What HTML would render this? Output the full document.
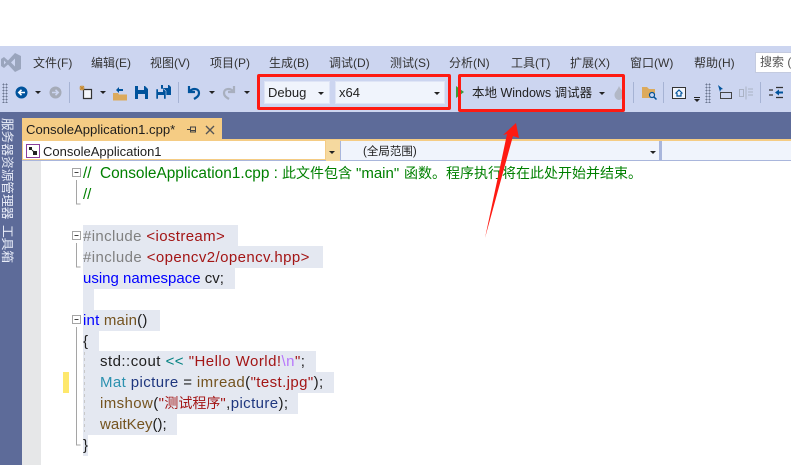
<!DOCTYPE html>
<html><head><meta charset="utf-8">
<style>
*{margin:0;padding:0;box-sizing:border-box}
html,body{width:791px;height:465px;overflow:hidden;background:#fff}
body{position:relative;font-family:"Liberation Sans","Noto Sans CJK SC",sans-serif;color:#222}
.a{position:absolute;white-space:nowrap}
.m{top:55px;font-size:12px;line-height:16px;color:#333}
.hl{position:absolute;background:#e4e8f1}
.c{position:absolute;left:0;white-space:pre;font-size:15px;line-height:21px;height:21px;color:#1e1e1e}
.g{color:#008000}.b{color:#0000ff}.r{color:#a31515}.p{color:#808080}.f{color:#74531f}.t{color:#2b91af}.n{color:#1f377f}.o{color:#008080}.e{color:#b776fb}
.cj{font-size:14px;letter-spacing:0}
.sep{position:absolute;top:82px;width:1px;height:21px;background:#a6b3d4}
.box{position:absolute;border:3px solid #fe1a12;border-radius:2px}
.dd{position:absolute;width:0;height:0;border-left:3.5px solid transparent;border-right:3.5px solid transparent;border-top:3.5px solid #222}
.grip{position:absolute;background-image:radial-gradient(circle,#6b7690 .8px,transparent .9px);background-size:3px 3px}
.side{position:absolute;left:0;width:14px;writing-mode:vertical-rl;text-orientation:sideways;font-size:12.700px;line-height:14px;color:#e8ecf8;white-space:nowrap}
svg{position:absolute;overflow:visible}
</style></head><body>
<div class="a" style="left:0;top:46px;width:791px;height:66px;background:#ccd5f0"></div>
<div class="a" style="left:0;top:112px;width:791px;height:27px;background:#5d6b99"></div>
<div class="a" style="left:0;top:139px;width:22px;height:326px;background:#5d6b99"></div>
<div class="a" style="left:22px;top:161px;width:19px;height:304px;background:#e6e7e8"></div>

<svg style="left:0;top:52px" width="22" height="21" viewBox="0 0 22 21"><path d="M1 7l3-2 4 3.500L15 1l6 3v13l-6 3-7-7.500L4 16l-3-2zM4 8.500v4l2-2zM15 6.500l-4 4 4 4z" fill="#9aa5bd" fill-rule="evenodd"/></svg>
<div class="a m" style="left:33px">文件(F)</div>
<div class="a m" style="left:91px">编辑(E)</div>
<div class="a m" style="left:150px">视图(V)</div>
<div class="a m" style="left:210px">项目(P)</div>
<div class="a m" style="left:269px">生成(B)</div>
<div class="a m" style="left:329px">调试(D)</div>
<div class="a m" style="left:390px">测试(S)</div>
<div class="a m" style="left:449px">分析(N)</div>
<div class="a m" style="left:511px">工具(T)</div>
<div class="a m" style="left:570px">扩展(X)</div>
<div class="a m" style="left:630px">窗口(W)</div>
<div class="a m" style="left:694px">帮助(H)</div>
<div class="a" style="left:755px;top:52px;width:40px;height:21px;background:#fff;border:1px solid #c4cbe0;font-size:12px;line-height:19px;padding-left:4px;color:#555">搜索 (</div>

<!-- toolbar -->
<div class="grip" style="left:2px;top:83px;width:6px;height:20px"></div>
<svg style="left:15px;top:86px" width="13" height="13" viewBox="0 0 13 13"><circle cx="6.500" cy="6.500" r="6" fill="#00539c"/><path d="M10 6.500H4M6.500 3.800L3.800 6.500l2.700 2.700" stroke="#fff" stroke-width="1.600" fill="none"/></svg>
<div class="dd" style="left:35px;top:91px"></div>
<svg style="left:49px;top:86px" width="13" height="13" viewBox="0 0 13 13"><circle cx="6.500" cy="6.500" r="6" fill="#a5abb8"/><path d="M3 6.500h6M6.500 3.800l2.700 2.700-2.700 2.700" stroke="#ccd5f0" stroke-width="1.600" fill="none"/></svg>
<div class="sep" style="left:69px"></div>
<svg style="left:79px;top:85px" width="14" height="15" viewBox="0 0 14 15"><path d="M4.500 4.500h8v9h-8z" fill="#f4f6fb" stroke="#333" stroke-width="1.200"/><path d="M3 .5v5M.5 3h5M1 1l4 4M5 1L1 5" stroke="#c98a2c" stroke-width="1"/></svg>
<div class="dd" style="left:100px;top:91px"></div>
<svg style="left:112px;top:85px" width="16" height="16" viewBox="0 0 16 16"><path d="M1 8h5l1 1.500h8v6H1z" fill="#dcaa5c"/><path d="M4 6l3-3v2h4v2H7v2z" fill="#00539c" transform="translate(0 -1)"/></svg>
<svg style="left:135px;top:86px" width="13" height="13" viewBox="0 0 13 13"><path d="M0 0h10l3 3v10H0z" fill="#00539c"/><path d="M3 0h6v4H3zM3 8h7v5H3z" fill="#ccd5f0"/></svg>
<svg style="left:156px;top:85px" width="15" height="14" viewBox="0 0 15 14"><path d="M5 0h8l2 2v8H5z" fill="#00539c"/><path d="M7 0h5v3H7z" fill="#ccd5f0"/><path d="M0 4h8l2 2v8H0z" fill="#00539c" stroke="#ccd5f0" stroke-width=".6"/><path d="M2 4h5v3H2zM2 10h6v4H2z" fill="#ccd5f0"/></svg>
<div class="sep" style="left:178px"></div>
<svg style="left:187px;top:85px" width="14" height="15" viewBox="0 0 14 15"><path d="M2 1v6h6M2.500 6.500C6 2.500 12 3.500 12 8c0 3-2.500 4.500-5 6" fill="none" stroke="#00539c" stroke-width="2.200"/></svg>
<div class="dd" style="left:209px;top:91px"></div>
<svg style="left:222px;top:85px" width="14" height="15" viewBox="0 0 14 15"><path d="M12 1v6H6M11.500 6.500C8 2.500 2 3.500 2 8c0 3 2.500 4.500 5 6" fill="none" stroke="#a8afbe" stroke-width="2.200"/></svg>
<div class="dd" style="left:244px;top:91px"></div>

<div class="a" style="left:264px;top:81px;width:66px;height:23px;background:#f0f4fc;border:1px solid #dfe5f6;font-size:13px;line-height:21px;padding-left:3px">Debug</div>
<div class="dd" style="left:318px;top:92px"></div>
<div class="a" style="left:335px;top:81px;width:110px;height:23px;background:#f0f4fc;border:1px solid #dfe5f6;font-size:13px;line-height:21px;padding-left:3px">x64</div>
<div class="dd" style="left:434px;top:92px"></div>
<svg style="left:456px;top:86px" width="9" height="12" viewBox="0 0 9 12"><path d="M0 0l8 6-8 6z" fill="#3c9a3c"/></svg>
<div class="a" style="left:472px;top:85px;font-size:12.500px;line-height:16px;color:#222">本地 Windows 调试器</div>
<div class="dd" style="left:599px;top:92px"></div>
<svg style="left:614px;top:86px" width="10" height="14" viewBox="0 0 10 14"><path d="M5 0c1 3 5 5 4.500 9C9 12 7 14 5 14S.5 12 .5 9C.5 6 3 5 5 0z" fill="#b2b8c6"/></svg>
<div class="sep" style="left:633px"></div>
<svg style="left:642px;top:86px" width="15" height="14" viewBox="0 0 15 14"><path d="M0 1h5l2 2h6v9H0z" fill="#dcaa5c"/><circle cx="10" cy="9" r="2.500" fill="#ccd5f0" stroke="#00539c" stroke-width="1.200"/><path d="M12 11l2.500 2.500" stroke="#00539c" stroke-width="1.500"/></svg>
<div class="sep" style="left:663px"></div>
<svg style="left:672px;top:87px" width="14" height="12" viewBox="0 0 14 12"><rect x=".5" y=".5" width="13" height="11" fill="#f0f4fc" stroke="#333"/><path d="M3.500 6.500L7 3l3.500 3.500M5 6v3h4V6" fill="none" stroke="#00539c" stroke-width="1.200"/></svg>
<div class="a" style="left:694px;top:97px;width:6px;height:1px;background:#222"></div>
<div class="dd" style="left:694px;top:99px;border-left-width:3px;border-right-width:3px;border-top-width:3px"></div>
<div class="grip" style="left:705px;top:83px;width:6px;height:20px"></div>
<svg style="left:717px;top:85px" width="15" height="15" viewBox="0 0 15 15"><rect x="3.500" y="7.500" width="11" height="6" fill="none" stroke="#444"/><path d="M1 0l5 4-2 .5L3 7z" fill="#00539c"/></svg>
<svg style="left:739px;top:86px" width="14" height="14" viewBox="0 0 14 14"><path d="M.5 3.500h4v7h-4zM7 .5v13M9 3h5M9 6h5M9 9h5" fill="none" stroke="#aab2c4"/></svg>
<div class="sep" style="left:760px"></div>
<svg style="left:769px;top:87px" width="15" height="11" viewBox="0 0 15 11"><path d="M0 3h4M0 8h4M14 .5H7M14 10.500H7" stroke="#333" stroke-width="1.300"/><path d="M6 5.500L10 2.500v2h4v2h-4v2z" fill="#00539c"/></svg>

<!-- red boxes -->
<div class="box" style="left:257px;top:74px;width:194px;height:36px"></div>
<div class="box" style="left:458px;top:74px;width:167px;height:38px"></div>

<!-- tab -->
<div class="a" style="left:22px;top:118px;width:200px;height:21px;background:#f5cc84;font-size:13.100px;line-height:23px;padding-left:4px;color:#1e1e1e">ConsoleApplication1.cpp*</div>
<svg style="left:187px;top:125px" width="10" height="9" viewBox="0 0 10 9"><path d="M0 4.500h3.500M3.500 1.500v6M3.500 2h5v5h-5M3.500 5.500h5" fill="none" stroke="#444"/></svg>
<svg style="left:205px;top:125px" width="10" height="10" viewBox="0 0 10 10"><path d="M1 1l8 8M9 1l-8 8" stroke="#555" stroke-width="1.400"/></svg>
<div class="a" style="left:22px;top:139px;width:769px;height:2px;background:#f5cc84"></div>

<!-- nav bar -->
<div class="a" style="left:22px;top:141px;width:769px;height:19px;background:#f0f4fc"></div>
<div class="a" style="left:22px;top:160px;width:769px;height:1px;background:#a9b6dc"></div>
<div class="a" style="left:22px;top:141px;width:304px;height:19px;background:#fff;border:1px solid #f5cc84;border-top:none"></div>
<div class="a" style="left:326px;top:140px;width:14px;height:21px;background:#f5d99f"></div>
<div class="dd" style="left:329px;top:151px"></div>
<svg style="left:26px;top:144px" width="14" height="14" viewBox="0 0 14 14"><rect x=".5" y=".5" width="13" height="13" fill="#fff" stroke="#8a3f9c"/><path d="M3 3h3v3H3zM7 7h4v4H7z" fill="#222"/><path d="M6 6l2 2" stroke="#222"/></svg>
<div class="a" style="left:43px;top:144px;font-size:13px;line-height:16px;color:#1e1e1e">ConsoleApplication1</div>
<div class="a" style="left:340px;top:141px;width:1px;height:19px;background:#a9b6dc"></div>
<div class="a" style="left:363px;top:144px;font-size:11.500px;line-height:16px;color:#1e1e1e">(全局范围)</div>
<div class="dd" style="left:650px;top:151px"></div>
<div class="a" style="left:659px;top:141px;width:3px;height:20px;background:#a9b6dc"></div>

<!-- highlights -->
<div class="hl" style="left:83px;top:225px;width:155px;height:21px"></div>
<div class="hl" style="left:83px;top:246px;width:240px;height:22px"></div>
<div class="hl" style="left:83px;top:268px;width:152px;height:21px"></div>
<div class="hl" style="left:83px;top:289px;width:11px;height:21px"></div>
<div class="hl" style="left:83px;top:310px;width:77px;height:21px"></div>
<div class="hl" style="left:83px;top:331px;width:16px;height:20px"></div>
<div class="hl" style="left:83px;top:351px;width:233px;height:21px"></div>
<div class="hl" style="left:83px;top:372px;width:251px;height:21px"></div>
<div class="hl" style="left:83px;top:393px;width:215px;height:21px"></div>
<div class="hl" style="left:83px;top:414px;width:94px;height:21px"></div>
<div class="hl" style="left:83px;top:435px;width:5px;height:21px"></div>

<!-- outline -->
<svg style="left:0;top:0" width="791" height="465">
<g fill="#fff" stroke="#a5a5a5"><rect x="72.500" y="168.500" width="8" height="8"/><rect x="72.500" y="231.500" width="8" height="8"/><rect x="72.500" y="315.500" width="8" height="8"/></g>
<path d="M74.500 172.500h4M74.500 235.500h4M74.500 319.500h4" stroke="#444"/>
<path d="M76.500 180v24h4M76.500 243v24h4M76.500 327v118h4" fill="none" stroke="#a5a5a5"/>
<path d="M84.500 352v80" stroke="#c8c8c8" stroke-dasharray="3 3"/>
</svg>
<div class="a" style="left:63px;top:372px;width:6px;height:21px;background:#fee86c"></div>

<!-- code -->
<div class="a" style="left:83px;top:0">
<div class="c g" style="top:163px;font-size:15.400px">//</div>
<div class="c g" style="top:163px;left:17px;font-size:15.400px">ConsoleApplication1.cpp :</div>
<div class="c g cj" style="top:163px;left:199px">此文件包含</div>
<div class="c g" style="top:163px;left:273px;font-size:15px">"main"</div>
<div class="c g cj" style="top:163px;left:321px">函数。程序执行将在此处开始并结束。</div>
<div class="c" style="top:184px"><span class="g">//</span></div>
<div class="c" style="top:226px;letter-spacing:.37px"><span class="p">#include</span> <span class="r">&lt;iostream&gt;</span></div>
<div class="c" style="top:247px;letter-spacing:.41px"><span class="p">#include</span> <span class="r">&lt;opencv2/opencv.hpp&gt;</span></div>
<div class="c" style="top:268px"><span class="b">using namespace</span> cv;</div>
<div class="c" style="top:310px;letter-spacing:.2px"><span class="b">int</span> <span class="f">main</span>()</div>
<div class="c" style="top:331px">{</div>
<div class="c" style="top:351px;left:17px;letter-spacing:.47px">std::cout <span class="o">&lt;&lt;</span> <span class="r">"Hello World!</span><span class="e">\n</span><span class="r">"</span>;</div>
<div class="c" style="top:372px;left:17px;letter-spacing:.4px"><span class="t">Mat</span> <span class="n">picture</span> = <span class="f">imread</span>(<span class="r">"test.jpg"</span>);</div>
<div class="c" style="top:393px;left:17px;letter-spacing:.4px"><span class="f">imshow</span>(<span class="r">"<span class="cj">测试程序</span>"</span>,<span class="n">picture</span>);</div>
<div class="c" style="top:414px;left:17px"><span class="f">waitKey</span>();</div>
<div class="c" style="top:435px">}</div>
</div>

<!-- sidebar vertical text -->
<div class="side" style="top:118px">服务器资源管理器</div>
<div class="side" style="top:225px">工具箱</div>

<!-- arrow -->
<svg style="left:0;top:0" width="791" height="465"><path d="M485 238L507 134 503 135 516 123 519 138 513 136Z" fill="#fe1a12"/></svg>
</body></html>
